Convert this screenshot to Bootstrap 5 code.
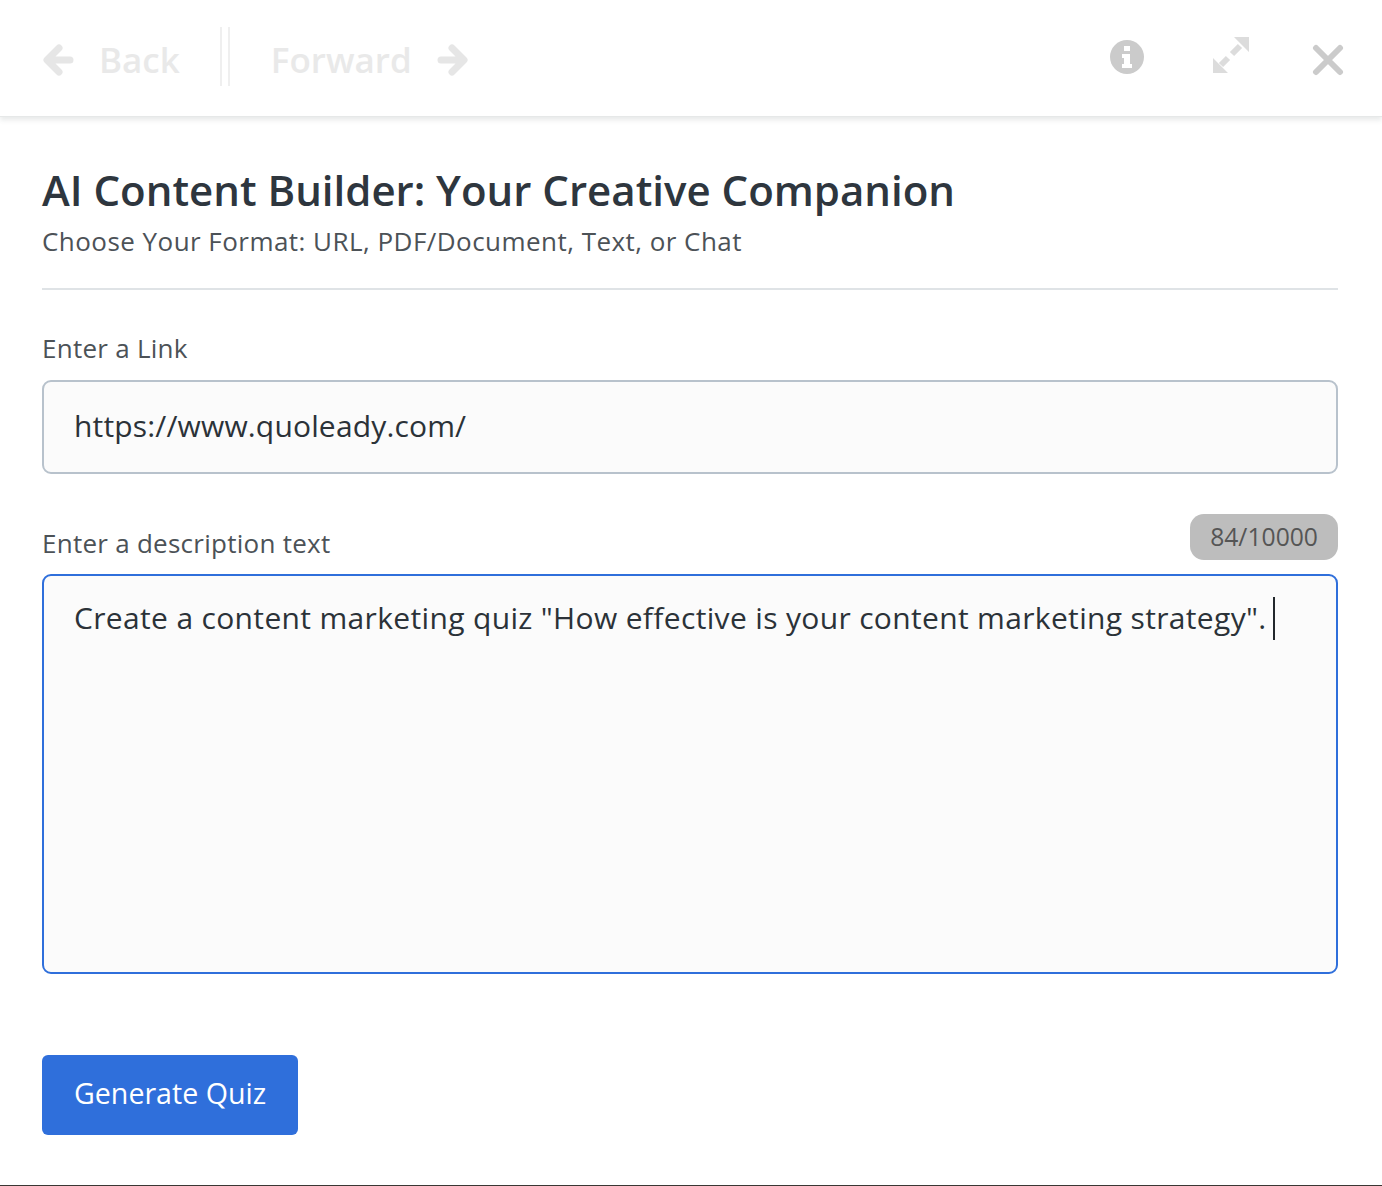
<!DOCTYPE html>
<html lang="en">
<head>
  <meta charset="UTF-8" />
  <meta name="viewport" content="width=device-width, initial-scale=1" />
  <title>AI Content Builder</title>
  <link href="https://cdn.jsdelivr.net/npm/bootstrap@5.3.3/dist/css/bootstrap.min.css" rel="stylesheet">
  <style>
    html, body { height: 100%; margin: 0; overflow: hidden; }
    body { font-family: "Open Sans", "Noto Sans", sans-serif; background: #fff; color: #2e363e; }

    .top-bar { height: 117px; padding: 3px 38px 0 42px; border-bottom: 1px solid #e6e8e8; box-shadow: 0 3px 5px rgba(60, 70, 70, .12); }
    .nav-word { font-size: 35px; font-weight: 600; color: #e9e9e9; line-height: 1; }
    .bar-split { width: 10px; height: 59px; border-left: 2px solid #efefef; border-right: 2px solid #efefef; margin: -7px 41px 0 40px; }
    .back-icon { margin-right: 25px; }
    .fwd-icon { margin-left: 25px; }
    .info-icon { margin: -5px 67px 0 0; }
    .size-icon { margin: -10px 62px 0 0; }

    .page-body { height: 1068px; padding: 48px 44px 0 42px; }
    .quiz-title { font-size: 42px; font-weight: 600; line-height: 50px; color: #2e363e; margin: 0; }
    .quiz-sub { font-size: 26px; letter-spacing: .46px; line-height: 30px; color: #4c5257; margin: 11px 0 0; }
    .head-rule { margin: 32px 0 0; border-top: 2px solid #dfe3e6; opacity: 1; }

    .field-label { font-size: 26px; letter-spacing: .26px; line-height: 30px; color: #4c5257; margin: 0; }
    .link-label { margin-top: 43px; margin-bottom: 17px; }
    .quiz-input, .quiz-input:focus { height: 94px; padding: 0 30px 4px; font-size: 30px; letter-spacing: .16px; color: #2b3238; background: #fbfbfb; border: 2px solid #b8c2cc; border-radius: 9px; box-shadow: none; }

    .desc-head { margin-top: 40px; margin-bottom: 13px; height: 47px; }
    .desc-head .field-label { margin-bottom: 3px; }
    .count-pill { background: #bdbdbd; color: #555; font-size: 24.7px; line-height: 46px; height: 46px; padding: 0 20px; border-radius: 14px; margin-bottom: 1px; }

    .desc-wrap { height: 400px; }
    .quiz-area, .quiz-area:focus { height: 400px; padding: 22px 30px; font-size: 30px; letter-spacing: .34px; line-height: 40px; color: #2b3238; background: #fbfbfb; border: 2px solid #2f6fdb; border-radius: 9px; box-shadow: none; resize: none; }
    .text-caret { position: absolute; left: 1231px; top: 23px; width: 2px; height: 43px; background: #23282c; }

    .make-btn, .make-btn:hover { margin-top: 81px; height: 80px; padding: 0 32px 4px; font-size: 28.6px; color: #fff; background: #2f6fdb; border: 0; border-radius: 6px; }
    .bottom-edge { position: fixed; left: 0; right: 0; bottom: 0; height: 1px; background: #3a3633; }
  </style>
</head>
<body>

  <!-- toolbar -->
  <header class="top-bar d-flex align-items-center">
    <svg class="back-icon" width="32" height="34" viewBox="0 0 32 34" fill="none" stroke="#e6e6e6" stroke-width="7" stroke-linecap="round" stroke-linejoin="round"><path d="M28 17H6M17 5 5 17l12 12"/></svg>
    <span class="nav-word">Back</span>
    <span class="bar-split"></span>
    <span class="nav-word">Forward</span>
    <svg class="fwd-icon" width="32" height="34" viewBox="0 0 32 34" fill="none" stroke="#e6e6e6" stroke-width="7" stroke-linecap="round" stroke-linejoin="round"><path d="M4 17h22M15 5l12 12-12 12"/></svg>

    <div class="ms-auto d-flex align-items-center">
      <svg class="info-icon" width="36" height="36" viewBox="0 0 36 36"><circle cx="18" cy="18" r="17" fill="#cbcbcb"/><path fill="#fff" d="M15 7h6v5h-6zM13 15h8v10h2v4H13v-4h2v-6h-2z"/></svg>
      <svg class="size-icon" width="38" height="38" viewBox="0 0 38 38" fill="#dcdcdc" stroke="#dcdcdc"><path stroke="none" d="M22 1h15v15zM1 22v15h15z"/><path fill="none" stroke-width="6" d="M28 10l-8 8M9 29l7-7"/></svg>
      <svg width="32" height="32" viewBox="0 0 32 32" fill="none" stroke="#cbcbcb" stroke-width="6" stroke-linecap="round"><path d="M4 4l24 24M28 4 4 28"/></svg>
    </div>
  </header>

  <main class="page-body">
    <h1 class="quiz-title">AI Content Builder: Your Creative Companion</h1>
    <p class="quiz-sub">Choose Your Format: URL, PDF/Document, Text, or Chat</p>
    <hr class="head-rule">

    <label class="field-label link-label d-block" for="linkInput">Enter a Link</label>
    <input id="linkInput" type="text" class="form-control quiz-input" value="https://www.quoleady.com/">

    <div class="desc-head d-flex justify-content-between align-items-end">
      <label class="field-label" for="descInput">Enter a description text</label>
      <span class="count-pill">84/10000</span>
    </div>
    <div class="desc-wrap position-relative">
      <textarea id="descInput" class="form-control quiz-area">Create a content marketing quiz "How effective is your content marketing strategy".</textarea>
      <span class="text-caret"></span>
    </div>

    <button type="button" class="btn make-btn">Generate Quiz</button>
  </main>

  <div class="bottom-edge"></div>

  <script src="https://cdn.jsdelivr.net/npm/bootstrap@5.3.3/dist/js/bootstrap.bundle.min.js"></script>
</body>
</html>
